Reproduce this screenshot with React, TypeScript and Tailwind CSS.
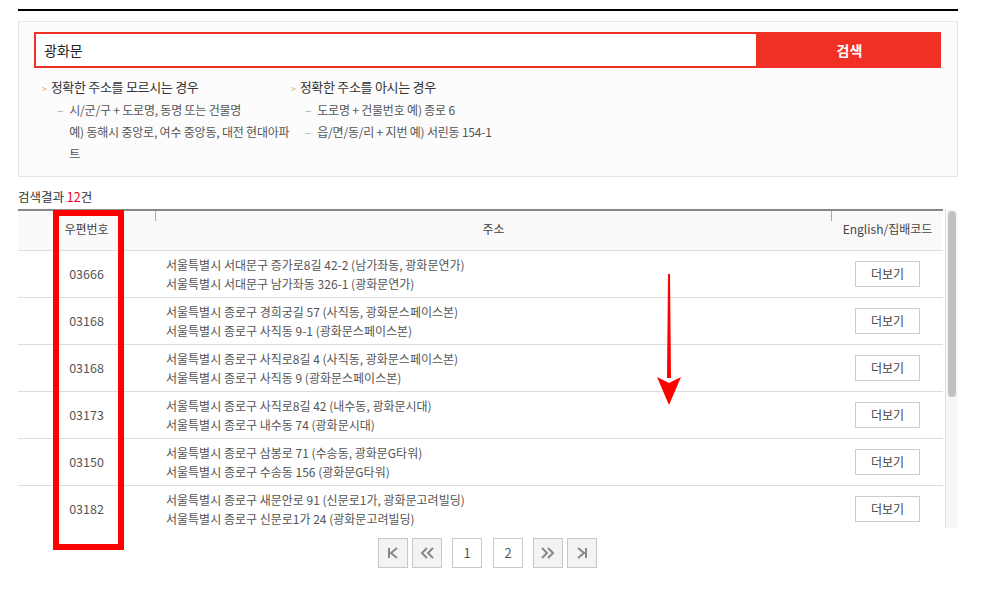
import React from 'react';

const rows = [
  { zip: '03666', road: '서울특별시 서대문구 증가로8길 42-2 (남가좌동, 광화문연가)', jibun: '서울특별시 서대문구 남가좌동 326-1 (광화문연가)' },
  { zip: '03168', road: '서울특별시 종로구 경희궁길 57 (사직동, 광화문스페이스본)', jibun: '서울특별시 종로구 사직동 9-1 (광화문스페이스본)' },
  { zip: '03168', road: '서울특별시 종로구 사직로8길 4 (사직동, 광화문스페이스본)', jibun: '서울특별시 종로구 사직동 9 (광화문스페이스본)' },
  { zip: '03173', road: '서울특별시 종로구 사직로8길 42 (내수동, 광화문시대)', jibun: '서울특별시 종로구 내수동 74 (광화문시대)' },
  { zip: '03150', road: '서울특별시 종로구 삼봉로 71 (수송동, 광화문G타워)', jibun: '서울특별시 종로구 수송동 156 (광화문G타워)' },
  { zip: '03182', road: '서울특별시 종로구 새문안로 91 (신문로1가, 광화문고려빌딩)', jibun: '서울특별시 종로구 신문로1가 24 (광화문고려빌딩)' },
];

const Bullet = () => <span className="mr-[4px] text-[9px] text-[#d9a45a]">&gt;</span>;
const Dash = () => <span className="mr-[6px] text-[#aaa]">–</span>;

const PageBtn = ({ children, gray }: { children: React.ReactNode; gray?: boolean }) => (
  <div
    className={`flex h-[30px] w-[30px] items-center justify-center border border-[#c8c8c8] text-[13px] text-[#555] ${gray ? 'bg-[#f3f3f3]' : 'bg-white'}`}
  >
    {children}
  </div>
);

export default function App() {
  return (
    <div
      className="relative h-[595px] w-[989px] overflow-hidden bg-white text-[#333]"
      style={{ fontFamily: '"Noto Sans CJK KR", "Noto Sans", sans-serif' }}
    >
      <div className="mx-[18px] w-[940px] pt-[9px]">
        <div className="h-[2px] bg-black" />

        {/* search box */}
        <div className="mt-[10px] h-[156px] border border-[#e6e6e6] bg-[#fcfcfc] pl-[15px] pr-[16px] pt-[10px]">
          <div className="flex h-[36px]">
            <div className="flex flex-1 items-center border-2 border-[#f03025] bg-white pl-[8px] text-[14px] text-[#222]">
              광화문
            </div>
            <div className="flex w-[183px] items-center justify-center bg-[#f03025] text-[14px] font-bold text-white">
              검색
            </div>
          </div>
          <div className="mt-[9px] flex pl-[8px] text-[12px] leading-[22px] tracking-[-0.2px]">
            <div className="w-[249px] shrink-0">
              <div className="text-[13px] leading-[20px] tracking-[-0.3px] text-[#333]"><Bullet />정확한 주소를 모르시는 경우</div>
              <div className="flex pl-[15px] text-[#555]">
                <Dash />
                <div className="whitespace-nowrap">
                  <div>시/군/구 + 도로명, 동명 또는 건물명</div>
                  <div>예) 동해시 중앙로, 여수 중앙동, 대전 현대아파</div>
                  <div>트</div>
                </div>
              </div>
            </div>
            <div className="whitespace-nowrap">
              <div className="text-[13px] leading-[20px] tracking-[-0.3px] text-[#333]"><Bullet />정확한 주소를 아시는 경우</div>
              <div className="flex pl-[14px] text-[#555]"><Dash />도로명 + 건물번호 예) 종로 6</div>
              <div className="flex pl-[14px] text-[#555]"><Dash />읍/면/동/리 + 지번 예) 서린동 154-1</div>
            </div>
          </div>
        </div>

        <div className="mt-[11px] text-[12.5px] leading-[18px] text-[#333]">
          검색결과 <span className="text-[#e60012]">12</span>건
        </div>

        {/* results */}
        <div className="mt-[3px] flex h-[319px]">
          <div className="w-[925px] overflow-hidden border-t-2 border-[#888]">
            <div className="flex h-[40px] border-b border-[#ddd] bg-[#fafafa] text-[12px] text-[#444]">
              <div className="flex w-[137px] items-center justify-center pb-[3px]">우편번호</div>
              <div className="relative flex flex-1 items-center justify-center pb-[3px]">
                <span className="absolute left-0 top-0 h-[10px] w-px bg-[#aaa]" />
                <span className="absolute right-0 top-0 h-[10px] w-px bg-[#aaa]" />
                주소
              </div>
              <div className="flex w-[111px] items-center justify-center pb-[3px]">English/집배코드</div>
            </div>
            {rows.map((r, i) => (
              <div key={i} className="flex h-[47px] border-b border-[#ddd] text-[12px] text-[#555]">
                <div className="flex w-[137px] items-center justify-center text-[12.5px]">{r.zip}</div>
                <div className="flex flex-1 flex-col justify-center pl-[11px] leading-[19px]">
                  <div>{r.road}</div>
                  <div>{r.jibun}</div>
                </div>
                <div className="flex w-[111px] items-center justify-center">
                  <div className="flex h-[26px] w-[65px] items-center justify-center border border-[#ccc] bg-white text-[12px] text-[#444]">
                    더보기
                  </div>
                </div>
              </div>
            ))}
          </div>
          <div className="ml-[2px] w-[13px] border-l border-[#e0e0e0] bg-[#f7f7f7] pl-[2px] pt-[2px]">
            <div className="h-[186px] w-[8px] rounded-full bg-[#c1c1c1]" />
          </div>
        </div>

        {/* pagination */}
        <div className="mt-[10px] flex justify-center pr-[1px]">
          <div className="flex items-center">
            <PageBtn gray>
              <svg width="14" height="14" viewBox="0 0 14 14" fill="none" stroke="#888" strokeWidth="2">
                <path d="M3 2v10M11 2L5 7l6 5" />
              </svg>
            </PageBtn>
            <div className="ml-[4px]">
              <PageBtn gray>
                <svg width="16" height="14" viewBox="0 0 16 14" fill="none" stroke="#888" strokeWidth="2">
                  <path d="M8 2L3 7l5 5M14 2L9 7l5 5" />
                </svg>
              </PageBtn>
            </div>
            <div className="ml-[10px]"><PageBtn>1</PageBtn></div>
            <div className="ml-[11px]"><PageBtn>2</PageBtn></div>
            <div className="ml-[10px]">
              <PageBtn gray>
                <svg width="16" height="14" viewBox="0 0 16 14" fill="none" stroke="#888" strokeWidth="2">
                  <path d="M2 2l5 5-5 5M8 2l5 5-5 5" />
                </svg>
              </PageBtn>
            </div>
            <div className="ml-[4px]">
              <PageBtn gray>
                <svg width="14" height="14" viewBox="0 0 14 14" fill="none" stroke="#888" strokeWidth="2">
                  <path d="M3 2l6 5-6 5M11 2v10" />
                </svg>
              </PageBtn>
            </div>
          </div>
        </div>
      </div>

      {/* annotation overlays */}
      <div className="absolute left-[53px] top-[210px] h-[340px] w-[71px] border-[6px] border-[#ff0000]" />
      <svg className="absolute left-[655px] top-[272px]" width="28" height="136" viewBox="0 0 28 136">
        <path d="M13 2h2l1 104h-4z" fill="#ff0000" />
        <path d="M2 105l12 6 12-6-12 28z" fill="#ff0000" />
      </svg>
    </div>
  );
}
